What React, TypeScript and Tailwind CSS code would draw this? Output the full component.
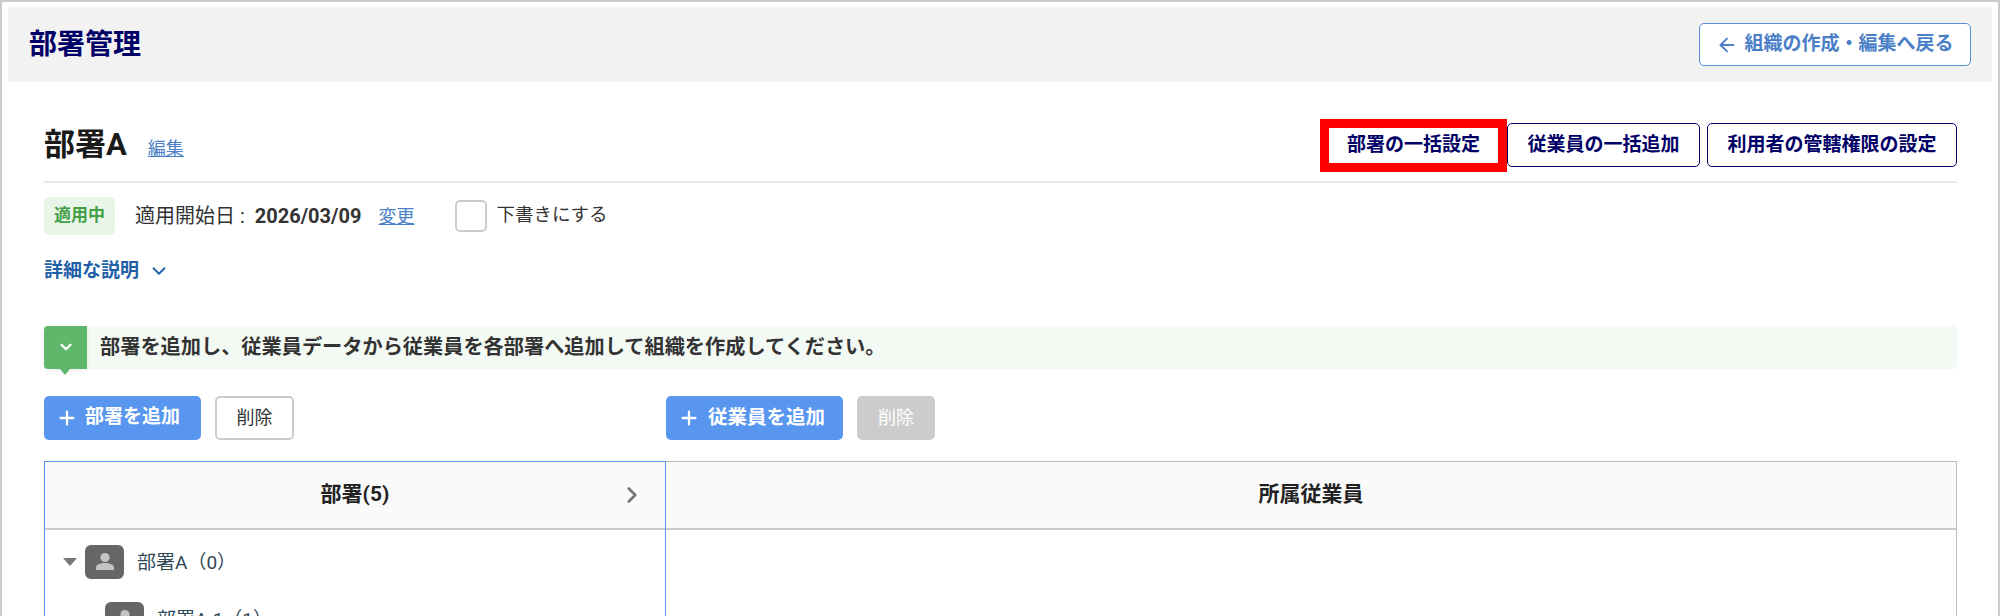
import { LuChevronDown, LuChevronRight, LuArrowLeft, LuPlus } from "react-icons/lu";

const font = "font-['Roboto','Noto_Sans_CJK_JP',sans-serif]";

const DeptIcon = () => (
  <span className="flex h-[34px] w-[39px] shrink-0 items-center justify-center rounded-[6px] bg-[#666666]">
    <svg width="20" height="20" viewBox="0 0 20 20">
      <circle cx="10" cy="5.5" r="4.6" fill="#c4c4c4" />
      <path d="M1 18v-2.5c0-3 4.5-4.5 9-4.5s9 1.500 9 4.500V18z" fill="#c4c4c4" />
    </svg>
  </span>
);

const App = () => {
  return (
    <div className={`${font} h-[616px] overflow-hidden border-t-2 border-r-2 border-l-2 border-[#cccccc] bg-white text-[#222222]`}>
      <div className="mx-[6px] mt-[5px] flex h-[75px] items-center justify-between bg-[#f2f2f2] pr-[21px] pl-[21px]">
        <h1 className="text-[28px] font-bold text-[#000066]">部署管理</h1>
        <button className="flex h-[43px] w-[272px] items-center justify-center gap-[6px] rounded-[5px] border border-[#5a8fd8] bg-white text-[19px] font-bold text-[#4a7fc8]">
          <LuArrowLeft className="text-[22px]" />
          組織の作成・編集へ戻る
        </button>
      </div>

      <div className="mr-[41px] ml-[42px]">
        <div className="mt-[37px] flex h-[64px] items-center justify-between border-b-2 border-[#e8e8e8] pb-[10px]">
          <div className="flex items-baseline gap-[21px]">
            <span className="text-[31px] font-bold text-[#1a1a1a]">部署A</span>
            <a className="text-[18px] text-[#4a7fc8] underline">編集</a>
          </div>
          <div className="flex items-center">
            <button className="h-[53px] w-[187px] border-[9px] border-[#ff0000] bg-white text-[19px] font-bold text-[#000066]">部署の一括設定</button>
            <button className="h-[44px] w-[193px] rounded-[5px] border border-[#000066] bg-white text-[19px] font-bold text-[#000066]">従業員の一括追加</button>
            <button className="ml-[7px] h-[44px] w-[250px] rounded-[5px] border border-[#000066] bg-white text-[19px] font-bold text-[#000066]">利用者の管轄権限の設定</button>
          </div>
        </div>

        <div className="mt-[14px] flex h-[38px] items-center">
          <span className="flex h-[38px] w-[71px] items-center justify-center rounded-[5px] bg-[#e8f5e9] text-[17px] font-bold text-[#43a047]">適用中</span>
          <span className="ml-[20px] text-[20px] text-[#333333]">適用開始日 : <b className="ml-[5px] font-bold">2026/03/09</b></span>
          <a className="ml-[17px] text-[18px] text-[#4a7fc8] underline">変更</a>
          <span className="ml-[41px] h-[32px] w-[32px] rounded-[5px] border-2 border-[#cccccc] bg-white" />
          <span className="ml-[9px] text-[18.5px] text-[#333333]">下書きにする</span>
        </div>

        <div className="mt-[22px] flex items-center gap-[9px] text-[19px] font-bold text-[#1f5fa8]">
          詳細な説明
          <LuChevronDown className="text-[22px]" />
        </div>

        <div className="relative mt-[40px] flex h-[43px] items-center rounded-[4px] bg-[#f3faf4] pl-[56px] text-[20.2px] font-bold text-[#333333]">
          <span className="absolute top-0 left-0 flex h-[43px] w-[43px] items-center justify-center rounded-l-[4px] bg-[#5fb76c] text-white shadow-[0_2px_6px_rgba(0,0,0,0.08)]">
            <LuChevronDown className="text-[18px]" strokeWidth={3} />
            <span className="absolute top-[43px] left-[16px] h-0 w-0 border-x-[5px] border-t-[6px] border-x-transparent border-t-[#5fb76c]" />
          </span>
          部署を追加し、従業員データから従業員を各部署へ追加して組織を作成してください。
        </div>

        <div className="mt-[27px] flex h-[44px]">
          <div className="flex w-[622px] gap-[14px]">
            <button className="flex w-[157px] items-center gap-[7px] rounded-[5px] bg-[#5896f0] pl-[12px] text-[19px] font-bold text-white">
              <LuPlus className="text-[22px]" strokeWidth={2.5} />
              部署を追加
            </button>
            <button className="w-[79px] rounded-[5px] border-2 border-[#cccccc] bg-white text-[18px] text-[#333333]">削除</button>
          </div>
          <div className="flex gap-[14px]">
            <button className="flex w-[177px] items-center gap-[8px] rounded-[5px] bg-[#5896f0] pl-[12px] text-[19.5px] font-bold text-white">
              <LuPlus className="text-[22px]" strokeWidth={2.5} />
              従業員を追加
            </button>
            <button className="w-[78px] rounded-[5px] bg-[#cccccc] text-[18px] text-white">削除</button>
          </div>
        </div>

        <div className="mt-[21px] flex h-[200px]">
          <div className="w-[622px] shrink-0 border border-b-0 border-[#5a96ee]">
            <div className="relative flex h-[68px] items-center justify-center border-b-2 border-[#cccccc] bg-[#fafafa] text-[21px] font-bold">
              部署(5)
              <LuChevronRight className="absolute right-[20px] text-[26px] text-[#777777]" strokeWidth={2.5} />
            </div>
            <div className="mt-[15px] flex items-center pl-[18px]">
              <span className="h-0 w-0 border-x-[7px] border-t-[8px] border-x-transparent border-t-[#777777]" />
              <span className="ml-[8px]"><DeptIcon /></span>
              <span className="ml-[13px] pt-[3px] text-[19px] text-[#2f4858]">部署A（0）</span>
            </div>
            <div className="mt-[23px] flex items-center pl-[60px]">
              <DeptIcon />
              <span className="ml-[13px] pt-[3px] text-[19px] text-[#2f4858]">部署A-1（1）</span>
            </div>
          </div>
          <div className="flex-1 border-t border-r border-[#bbbbbb]">
            <div className="flex h-[68px] items-center justify-center border-b-2 border-[#cccccc] bg-[#fafafa] text-[21px] font-bold">所属従業員</div>
          </div>
        </div>
      </div>
    </div>
  );
};

export default App;
